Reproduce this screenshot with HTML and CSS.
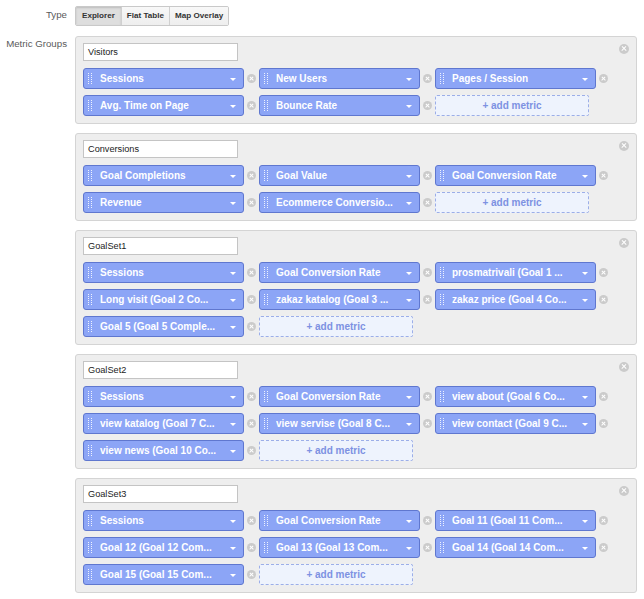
FILE: index.html
```html
<!DOCTYPE html>
<html>
<head>
<meta charset="utf-8">
<link rel="stylesheet" href="styles.css">
</head>
<body>
<div class="form">
  <div class="row type-row">
    <div class="label">Type</div>
    <div class="btn-group">
      <span class="btn active">Explorer</span>
      <span class="btn">Flat Table</span>
      <span class="btn">Map Overlay</span>
    </div>
  </div>
  <div class="row groups-row">
    <div class="label">Metric Groups</div>
    <div class="groups">
      <div class="group">
        <span class="close"></span>
        <div class="name">Visitors</div>
        <div class="metrics">
          <div class="cell"><div class="pill"><span class="grip"></span><span class="txt">Sessions</span><span class="arrow"></span></div><span class="rm"></span></div>
          <div class="cell"><div class="pill"><span class="grip"></span><span class="txt">New Users</span><span class="arrow"></span></div><span class="rm"></span></div>
          <div class="cell"><div class="pill"><span class="grip"></span><span class="txt">Pages / Session</span><span class="arrow"></span></div><span class="rm"></span></div>
          <div class="cell"><div class="pill"><span class="grip"></span><span class="txt">Avg. Time on Page</span><span class="arrow"></span></div><span class="rm"></span></div>
          <div class="cell"><div class="pill"><span class="grip"></span><span class="txt">Bounce Rate</span><span class="arrow"></span></div><span class="rm"></span></div>
          <div class="cell"><div class="add">+ add metric</div></div>
        </div>
      </div>
      <div class="group">
        <span class="close"></span>
        <div class="name">Conversions</div>
        <div class="metrics">
          <div class="cell"><div class="pill"><span class="grip"></span><span class="txt">Goal Completions</span><span class="arrow"></span></div><span class="rm"></span></div>
          <div class="cell"><div class="pill"><span class="grip"></span><span class="txt">Goal Value</span><span class="arrow"></span></div><span class="rm"></span></div>
          <div class="cell"><div class="pill"><span class="grip"></span><span class="txt">Goal Conversion Rate</span><span class="arrow"></span></div><span class="rm"></span></div>
          <div class="cell"><div class="pill"><span class="grip"></span><span class="txt">Revenue</span><span class="arrow"></span></div><span class="rm"></span></div>
          <div class="cell"><div class="pill"><span class="grip"></span><span class="txt">Ecommerce Conversio...</span><span class="arrow"></span></div><span class="rm"></span></div>
          <div class="cell"><div class="add">+ add metric</div></div>
        </div>
      </div>
      <div class="group">
        <span class="close"></span>
        <div class="name">GoalSet1</div>
        <div class="metrics">
          <div class="cell"><div class="pill"><span class="grip"></span><span class="txt">Sessions</span><span class="arrow"></span></div><span class="rm"></span></div>
          <div class="cell"><div class="pill"><span class="grip"></span><span class="txt">Goal Conversion Rate</span><span class="arrow"></span></div><span class="rm"></span></div>
          <div class="cell"><div class="pill"><span class="grip"></span><span class="txt">prosmatrivali (Goal 1 ...</span><span class="arrow"></span></div><span class="rm"></span></div>
          <div class="cell"><div class="pill"><span class="grip"></span><span class="txt">Long visit (Goal 2 Co...</span><span class="arrow"></span></div><span class="rm"></span></div>
          <div class="cell"><div class="pill"><span class="grip"></span><span class="txt">zakaz katalog (Goal 3 ...</span><span class="arrow"></span></div><span class="rm"></span></div>
          <div class="cell"><div class="pill"><span class="grip"></span><span class="txt">zakaz price (Goal 4 Co...</span><span class="arrow"></span></div><span class="rm"></span></div>
          <div class="cell"><div class="pill"><span class="grip"></span><span class="txt">Goal 5 (Goal 5 Comple...</span><span class="arrow"></span></div><span class="rm"></span></div>
          <div class="cell"><div class="add">+ add metric</div></div>
        </div>
      </div>
      <div class="group">
        <span class="close"></span>
        <div class="name">GoalSet2</div>
        <div class="metrics">
          <div class="cell"><div class="pill"><span class="grip"></span><span class="txt">Sessions</span><span class="arrow"></span></div><span class="rm"></span></div>
          <div class="cell"><div class="pill"><span class="grip"></span><span class="txt">Goal Conversion Rate</span><span class="arrow"></span></div><span class="rm"></span></div>
          <div class="cell"><div class="pill"><span class="grip"></span><span class="txt">view about (Goal 6 Co...</span><span class="arrow"></span></div><span class="rm"></span></div>
          <div class="cell"><div class="pill"><span class="grip"></span><span class="txt">view katalog (Goal 7 C...</span><span class="arrow"></span></div><span class="rm"></span></div>
          <div class="cell"><div class="pill"><span class="grip"></span><span class="txt">view servise (Goal 8 C...</span><span class="arrow"></span></div><span class="rm"></span></div>
          <div class="cell"><div class="pill"><span class="grip"></span><span class="txt">view contact (Goal 9 C...</span><span class="arrow"></span></div><span class="rm"></span></div>
          <div class="cell"><div class="pill"><span class="grip"></span><span class="txt">view news (Goal 10 Co...</span><span class="arrow"></span></div><span class="rm"></span></div>
          <div class="cell"><div class="add">+ add metric</div></div>
        </div>
      </div>
      <div class="group">
        <span class="close"></span>
        <div class="name">GoalSet3</div>
        <div class="metrics">
          <div class="cell"><div class="pill"><span class="grip"></span><span class="txt">Sessions</span><span class="arrow"></span></div><span class="rm"></span></div>
          <div class="cell"><div class="pill"><span class="grip"></span><span class="txt">Goal Conversion Rate</span><span class="arrow"></span></div><span class="rm"></span></div>
          <div class="cell"><div class="pill"><span class="grip"></span><span class="txt">Goal 11 (Goal 11 Com...</span><span class="arrow"></span></div><span class="rm"></span></div>
          <div class="cell"><div class="pill"><span class="grip"></span><span class="txt">Goal 12 (Goal 12 Com...</span><span class="arrow"></span></div><span class="rm"></span></div>
          <div class="cell"><div class="pill"><span class="grip"></span><span class="txt">Goal 13 (Goal 13 Com...</span><span class="arrow"></span></div><span class="rm"></span></div>
          <div class="cell"><div class="pill"><span class="grip"></span><span class="txt">Goal 14 (Goal 14 Com...</span><span class="arrow"></span></div><span class="rm"></span></div>
          <div class="cell"><div class="pill"><span class="grip"></span><span class="txt">Goal 15 (Goal 15 Com...</span><span class="arrow"></span></div><span class="rm"></span></div>
          <div class="cell"><div class="add">+ add metric</div></div>
        </div>
      </div>
    </div>
  </div>
</div>
</body>
</html>
```
FILE: styles.css
```css
html, body {
  margin: 0;
  padding: 0;
  background: #fff;
}
body {
  font-family: "Liberation Sans", Arial, sans-serif;
  color: #333;
}
.form {
  padding-top: 6px;
}
.row {
  display: flex;
  align-items: flex-start;
}
.label {
  width: 67px;
  margin-right: 8px;
  text-align: right;
  font-size: 9.7px;
  color: #5a5a5a;
  flex: none;
}
.type-row .label {
  line-height: 18px;
}
.groups-row {
  margin-top: 10px;
}
.groups-row .label {
  line-height: 16px;
}
.btn-group {
  display: flex;
  height: 18px;
  border: 1px solid #c9c9c9;
  border-radius: 2px;
  overflow: hidden;
}
.btn {
  display: block;
  line-height: 18px;
  font-size: 8.1px;
  font-weight: bold;
  color: #333;
  padding: 0 5px;
  background: linear-gradient(#f8f8f8, #eeeeee);
  border-left: 1px solid #d0d0d0;
}
.btn:first-child {
  border-left: none;
}
.btn.active {
  background: #dedede;
  box-shadow: inset 0 1px 2px rgba(0, 0, 0, 0.15);
  padding: 0 6px;
}
.groups {
  display: flex;
  flex-direction: column;
  gap: 9px;
  width: 562px;
}
.group {
  position: relative;
  background: #eeeeee;
  border: 1px solid #d4d4d4;
  border-radius: 3px;
  padding: 6px 8px 7px 7px;
}
.close {
  position: absolute;
  top: 7px;
  right: 7px;
  width: 10px;
  height: 10px;
  border-radius: 50%;
  background: #cbcbcb;
}
.close::before, .close::after, .rm::before, .rm::after {
  content: "";
  position: absolute;
  left: 50%;
  top: 50%;
  width: 6px;
  height: 1.4px;
  margin-left: -3px;
  margin-top: -0.7px;
  background: #fff;
  transform: rotate(45deg);
}
.close::after, .rm::after {
  transform: rotate(-45deg);
}
.name {
  width: 145px;
  height: 16px;
  line-height: 16px;
  border: 1px solid #c4c4c4;
  background: #fff;
  font-size: 9.2px;
  color: #222;
  padding: 0 4px;
  margin-bottom: 7px;
}
.metrics {
  display: grid;
  grid-template-columns: repeat(3, 176px);
  row-gap: 6px;
}
.cell {
  display: flex;
  align-items: center;
}
.pill {
  display: flex;
  align-items: center;
  width: 159px;
  height: 19px;
  background: #8ca5f6;
  border: 1px solid #5f77cf;
  border-radius: 3px;
  color: #fff;
  font-size: 10px;
  font-weight: bold;
}
.grip {
  width: 4px;
  height: 11px;
  margin-left: 4px;
  margin-right: 8px;
  background: radial-gradient(circle at 0.5px 0.5px, rgba(255,255,255,0.85) 0.6px, transparent 0.9px) 0 0 / 3px 2px;
  flex: none;
}
.txt {
  flex: 1;
  white-space: nowrap;
  overflow: hidden;
}
.arrow {
  width: 0;
  height: 0;
  border-left: 3px solid transparent;
  border-right: 3px solid transparent;
  border-top: 3px solid #fff;
  margin-right: 7px;
  margin-top: 2px;
  flex: none;
}
.rm {
  position: relative;
  width: 9px;
  height: 9px;
  border-radius: 50%;
  background: #cbcbcb;
  margin-left: 3px;
  flex: none;
}
.rm::before, .rm::after {
  width: 5px;
  margin-left: -2.5px;
}
.add {
  width: 152px;
  height: 19px;
  line-height: 19px;
  border: 1px dashed #9caee8;
  border-radius: 2px;
  background: #eef3fd;
  color: #7d91e2;
  font-size: 10px;
  font-weight: bold;
  text-align: center;
}
```
